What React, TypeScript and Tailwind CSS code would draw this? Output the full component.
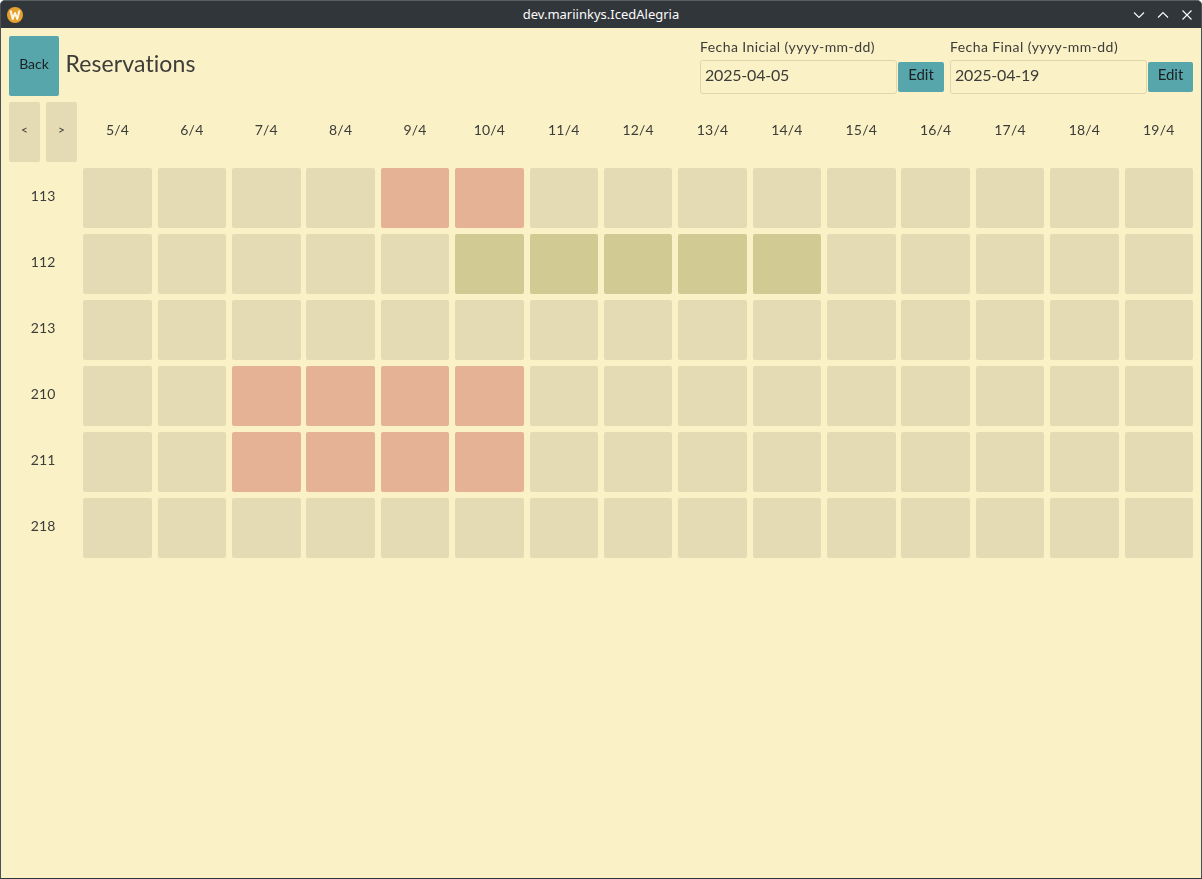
const days = ["5/4","6/4","7/4","8/4","9/4","10/4","11/4","12/4","13/4","14/4","15/4","16/4","17/4","18/4","19/4"];
const rows: { name: string; red?: number[]; yellow?: number[] }[] = [
  { name: "113", red: [4, 5] },
  { name: "112", yellow: [5, 6, 7, 8, 9] },
  { name: "213" },
  { name: "210", red: [2, 3, 4, 5] },
  { name: "211", red: [2, 3, 4, 5] },
  { name: "218" },
];

function Logo() {
  return (
    <svg width="16" height="16" viewBox="0 0 16 16" className="shrink-0">
      <circle cx="8" cy="8" r="8" fill="#e5a22f" />
      <path d="M3.6 3.6 L5.7 12 L8 6 L10.3 12 L12.4 3.6" fill="none" stroke="#fdf6e6" strokeWidth="2" strokeLinejoin="round" />
    </svg>
  );
}

function DateField({ label, value, width }: { label: string; value: string; width: string }) {
  return (
    <div className={"flex flex-col " + width}>
      <div className="h-[20px] mt-[1px] mb-[3px] text-[14px] leading-[20px] tracking-[0.42px]">{label}</div>
      <div className="flex items-center gap-[1px]">
        <div className="w-[197px] shrink-0 h-[34px] border border-[#dfd6b0] rounded-[3px] pl-[4px] text-[16px] leading-[27px] tracking-[-0.2px]">{value}</div>
        <div className="flex-1 h-[30px] bg-[#56a6ac] rounded-[2px] flex items-center justify-center text-[15px] leading-[28px] pb-[6px] text-[#1d2021]">Edit</div>
      </div>
    </div>
  );
}

export default function App() {
  return (
    <div className="w-[1202px] h-[879px] bg-[#31363b] rounded-t-[5px] overflow-hidden flex flex-col border border-[#4b5055] border-b-[#31363b] border-t-[#5a5f64]" style={{ fontFamily: "Lato, sans-serif" }}>
      <div className="h-[27px] shrink-0 bg-[#31363b] flex items-center text-[#fcfcfc]">
        <div className="w-[100px] pl-[6px]"><Logo /></div>
        <div className="flex-1 text-center text-[13px] pt-[1px]" style={{ fontFamily: "'Noto Sans', sans-serif" }}>dev.mariinkys.IcedAlegria</div>
        <div className="w-[100px] flex items-center justify-end gap-[12px] pr-[8px]">
          <svg width="12" height="12" viewBox="0 0 12 12" fill="none" stroke="#fcfcfc" strokeWidth="1.1"><path d="M1 3.5 L6 8.5 L11 3.5" /></svg>
          <svg width="12" height="12" viewBox="0 0 12 12" fill="none" stroke="#fcfcfc" strokeWidth="1.1"><path d="M1 8.5 L6 3.5 L11 8.5" /></svg>
          <svg width="12" height="12" viewBox="0 0 12 12" fill="none" stroke="#fcfcfc" strokeWidth="1.1"><path d="M1.5 1.5 L10.5 10.5 M10.5 1.5 L1.5 10.5" /></svg>
        </div>
      </div>
      <div className="flex-1 bg-[#fbf1c7] pt-[8px] pl-[8px] pr-[8px] text-[#3c3c38] flex flex-col gap-[6px]">
        <div className="flex items-start h-[60px] will-change-transform">
          <div className="w-[50px] h-[60px] bg-[#56a6ac] rounded-[2px] flex items-center justify-center text-[14px] pb-[6px] text-[#1d2021]">Back</div>
          <div className="ml-[6.5px] flex-1 h-[60px] flex items-center text-[23px] leading-none pb-[5px] tracking-[0.1px]">Reservations</div>
          <div className="flex gap-[6px]">
            <DateField width="w-[244px]" label="Fecha Inicial (yyyy-mm-dd)" value="2025-04-05" />
            <DateField width="w-[243px]" label="Fecha Final (yyyy-mm-dd)" value="2025-04-19" />
          </div>
        </div>
        <div className="grid grid-cols-[68.4px_repeat(15,68.5px)] gap-x-[5.88px] gap-y-[6px] w-[1190px] will-change-transform">
          <div className="flex gap-[6px] h-[60px]">
            <div className="w-[31px] h-[60px] bg-[#e4dbb4] rounded-[2px] flex items-center justify-center text-[12px] pb-[4px]">&lt;</div>
            <div className="w-[31px] h-[60px] bg-[#e4dbb4] rounded-[2px] flex items-center justify-center text-[12px] pb-[4px]">&gt;</div>
          </div>
          {days.map((d) => (
            <div key={d} className="h-[60px] flex items-center justify-center text-[14px] pb-[5px] tracking-[0.2px]">{d}</div>
          ))}
          {rows.map((r) => [
            <div key={r.name} className="h-[60px] flex items-center justify-center text-[14px] pb-[5px] tracking-[0.2px]">{r.name}</div>,
            ...days.map((d, i) => (
              <div
                key={r.name + d}
                className={
                  "h-[60px] rounded-[2px] " +
                  (r.red?.includes(i) ? "bg-[#e6b295]" : r.yellow?.includes(i) ? "bg-[#d2ca93]" : "bg-[#e4dbb4]")
                }
              />
            )),
          ])}
        </div>
      </div>
    </div>
  );
}
